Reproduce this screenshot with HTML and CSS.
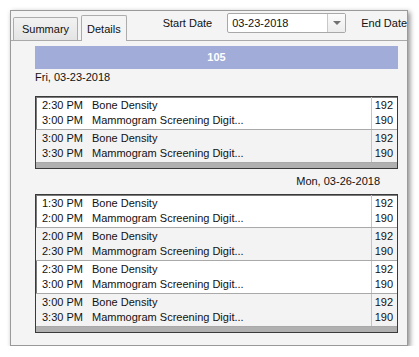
FILE: index.html
```html
<!DOCTYPE html>
<html lang="en">
<head>
  <meta charset="UTF-8">
  <title>Schedule - Details</title>
  <link rel="stylesheet" href="styles.css">
</head>
<body>

<div class="window">

  <div class="toolbar">
    <div class="tabs">
      <div class="tab">Summary</div>
      <div class="tab active">Details</div>
    </div>

    <div class="date-filter">
      <span class="date-label">Start Date</span>
      <div class="combo">
        <span class="combo-value">03-23-2018</span>
        <span class="combo-button"><span class="arrow"></span></span>
      </div>
      <span class="date-label">End Date</span>
    </div>
  </div>

  <div class="content">
    <div class="room-bar">105</div>

    <div class="day-label">Fri, 03-23-2018</div>
    <div class="schedule">
      <div class="slot">
        <div class="slot-rows">
          <div class="row"><span class="time">2:30 PM</span><span class="name">Bone Density</span></div>
          <div class="row"><span class="time">3:00 PM</span><span class="name">Mammogram Screening Digit...</span></div>
        </div>
        <div class="slot-codes"><div>192</div><div>190</div></div>
      </div>
      <div class="slot alt">
        <div class="slot-rows">
          <div class="row"><span class="time">3:00 PM</span><span class="name">Bone Density</span></div>
          <div class="row"><span class="time">3:30 PM</span><span class="name">Mammogram Screening Digit...</span></div>
        </div>
        <div class="slot-codes"><div>192</div><div>190</div></div>
      </div>
      <div class="schedule-footer"></div>
    </div>

    <div class="day-label right">Mon, 03-26-2018</div>
    <div class="schedule">
      <div class="slot">
        <div class="slot-rows">
          <div class="row"><span class="time">1:30 PM</span><span class="name">Bone Density</span></div>
          <div class="row"><span class="time">2:00 PM</span><span class="name">Mammogram Screening Digit...</span></div>
        </div>
        <div class="slot-codes"><div>192</div><div>190</div></div>
      </div>
      <div class="slot alt">
        <div class="slot-rows">
          <div class="row"><span class="time">2:00 PM</span><span class="name">Bone Density</span></div>
          <div class="row"><span class="time">2:30 PM</span><span class="name">Mammogram Screening Digit...</span></div>
        </div>
        <div class="slot-codes"><div>192</div><div>190</div></div>
      </div>
      <div class="slot">
        <div class="slot-rows">
          <div class="row"><span class="time">2:30 PM</span><span class="name">Bone Density</span></div>
          <div class="row"><span class="time">3:00 PM</span><span class="name">Mammogram Screening Digit...</span></div>
        </div>
        <div class="slot-codes"><div>192</div><div>190</div></div>
      </div>
      <div class="slot alt">
        <div class="slot-rows">
          <div class="row"><span class="time">3:00 PM</span><span class="name">Bone Density</span></div>
          <div class="row"><span class="time">3:30 PM</span><span class="name">Mammogram Screening Digit...</span></div>
        </div>
        <div class="slot-codes"><div>192</div><div>190</div></div>
      </div>
      <div class="schedule-footer"></div>
    </div>
  </div>

</div>

</body>
</html>
```

FILE: styles.css
```css
:root {
  --panel: #f4f4f4;
  --line: #a9a9a9;
  --bar: #a2acd8;
  --text: #111;
}

body {
  margin: 0;
  background-color: #fff;
  font-family: "Liberation Sans", Arial, sans-serif;
  font-size: 11px;
  color: var(--text);
}

/* Window frame */
.window {
  box-sizing: border-box;
  width: 398px;
  height: 336px;
  margin: 10px 0 0 10px;
  background-color: var(--panel);
  border: 1px solid #9a9a9a;
  box-shadow: 2px 2px 5px rgba(0,0,0,0.45);
  overflow: hidden;
}

/* Tabs + date filter */
.toolbar {
  display: flex;
  align-items: flex-start;
  height: 29px;
  border-bottom: 1px solid var(--line);
  white-space: nowrap;
}

.tabs {
  display: flex;
  align-items: flex-end;
  height: 29px;
  padding-left: 2px;
}

.tab {
  height: 22px;
  line-height: 22px;
  padding: 0 8px;
  border: 1px solid #acacac;
  border-bottom: none;
  border-radius: 2px 2px 0 0;
  background: linear-gradient(#f2f2f2, #e4e4e4);
}

.tab.active {
  height: 25px;
  line-height: 26px;
  margin-left: 3px;
  margin-bottom: -1px;
  padding: 0 5px;
  background: var(--panel);
  position: relative;
}

.date-filter {
  display: flex;
  align-items: center;
  height: 20px;
  margin-top: 2px;
  margin-left: 36px;
  gap: 15px;
}

.combo {
  box-sizing: border-box;
  display: flex;
  width: 119px;
  height: 20px;
  background-color: #fff;
  border: 1px solid #a8a8a8;
  border-radius: 2px;
}

.combo-value {
  flex: 1;
  line-height: 18px;
  padding-left: 4px;
}

.combo-button {
  display: flex;
  align-items: center;
  justify-content: center;
  width: 17px;
  border-left: 1px solid #c8c8c8;
  background: linear-gradient(#fbfbfb, #ececec);
}

.arrow {
  width: 0;
  height: 0;
  border-left: 4px solid transparent;
  border-right: 4px solid transparent;
  border-top: 4px solid #707070;
}

/* Schedule content */
.content {
  padding: 5px 9px 0 24px;
}

.room-bar {
  height: 23px;
  line-height: 23px;
  background-color: var(--bar);
  color: #fff;
  font-weight: bold;
  text-align: center;
}

.day-label {
  height: 14px;
  line-height: 14px;
  margin-top: 1px;
  margin-bottom: 12px;
}

.day-label.right {
  text-align: right;
  padding-right: 18px;
  margin-top: 5px;
  margin-bottom: 6px;
}

.schedule {
  border: 1px solid #3a3a3a;
  box-shadow: inset 1px 1px 0 #7a7a7a;
  background-color: #fff;
}

.slot {
  display: flex;
  border-bottom: 1px solid var(--line);
  padding: 1px 0 1px 1px;
}

.slot.alt {
  background-color: #f3f3f3;
}

.slot-rows {
  flex: 1;
}

.row {
  display: flex;
  height: 15px;
  line-height: 15px;
}

.time {
  width: 50px;
  padding-left: 5px;
}

.slot-codes {
  width: 26px;
  margin: -1px 0;
  padding: 1px 4px 1px 0;
  box-sizing: border-box;
  border-left: 1px solid #c4c4c4;
  text-align: right;
  line-height: 15px;
}

.schedule-footer {
  height: 5px;
  background-color: #b0b0b0;
}
```
